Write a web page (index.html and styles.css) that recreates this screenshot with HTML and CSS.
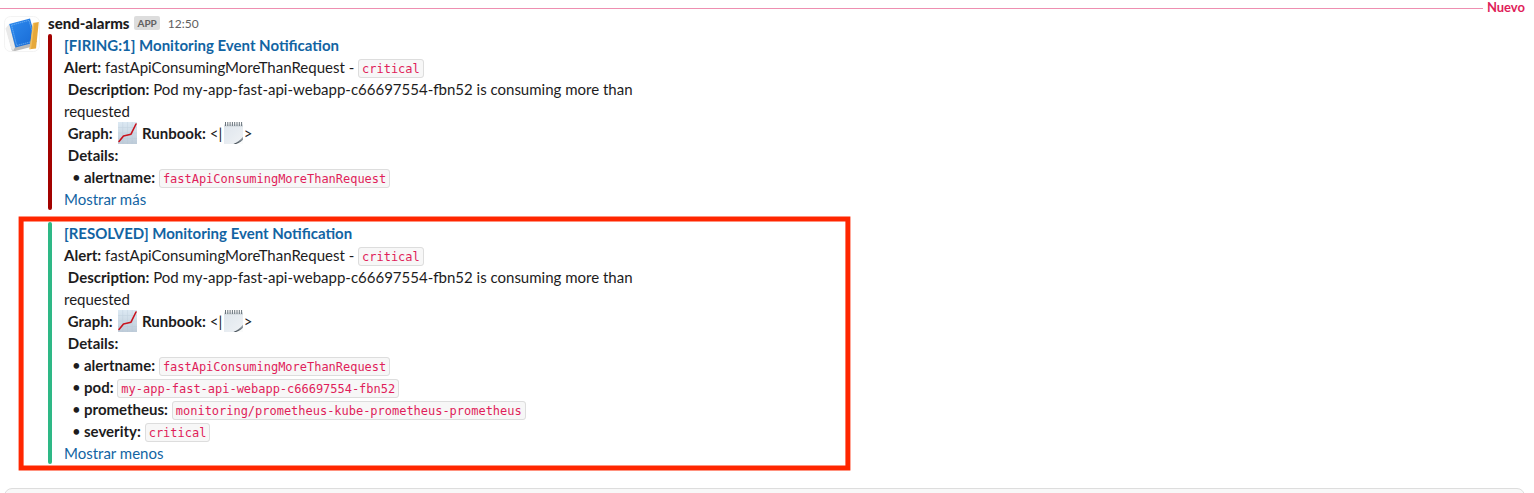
FILE: index.html
```html
<!DOCTYPE html>
<html lang="es">
<head>
<meta charset="utf-8">
<title>send-alarms</title>
<link rel="stylesheet" href="styles.css">
</head>
<body>
<svg class="defs" width="0" height="0" aria-hidden="true">
  <defs>
    <linearGradient id="paper" x1="0" y1="0" x2="0" y2="1"><stop offset="0" stop-color="#dce9f3"/><stop offset="1" stop-color="#bdcbd8"/></linearGradient>
    <linearGradient id="sheet" x1="0" y1="0" x2="1" y2="1"><stop offset="0" stop-color="#dfe6ed"/><stop offset="1" stop-color="#eff2f5"/></linearGradient>
    <linearGradient id="shade" x1="0" y1="1" x2="1" y2="0"><stop offset="0" stop-color="#39434b"/><stop offset="1" stop-color="#a4adb4"/></linearGradient>
    <symbol id="chart" viewBox="0 0 19 22">
      <path fill="url(#paper)" d="M0 0h19v22H0z"/>
      <path d="M0 5.5h19M0 11h19M0 16.5h19M4.7 0v22M9.5 0v22M14.2 0v22" stroke="#b3c5d4" stroke-width=".5" opacity=".5"/>
      <path d="M1 19.500 5.500 14 13 12.200 18 2" fill="none" stroke="#c9131d" stroke-width="1.6" stroke-linejoin="round" stroke-linecap="round"/>
    </symbol>
    <symbol id="notepad" viewBox="0 0 19 22">
      <path fill="url(#sheet)" d="M0 3h19v19H0z"/>
      <path fill="#d7dde2" d="M0 2.500h19V5H0z"/>
      <path d="M1.500 0v4M3.800 0v4M6.100 0v4M8.400 0v4M10.700 0v4M13 0v4M15.300 0v4M17.600 0v4" stroke="#69737b" stroke-width="1"/>
      <path fill="url(#shade)" d="M9.500 21.800C13 20.500 16 18.500 19 14.800V18C16.500 20.500 14 22 11.500 22z"/>
      <path fill="#fafbfb" d="M19 18v4h-6.500c2.500-.8 4.700-2.300 6.500-4z"/>
    </symbol>
  </defs>
</svg>
<main class="channel">
  <div class="divider"><span class="divider-line"></span><span class="divider-label">Nuevo</span></div>
  <article class="message">
    <svg class="avatar" viewBox="0 0 36 36" aria-hidden="true">
      <defs><linearGradient id="cover" x1="0" y1="0" x2="1" y2="1"><stop stop-color="#2e8bef"/><stop offset="1" stop-color="#1768d3"/></linearGradient></defs>
      <rect x=".5" y=".5" width="35" height="35" rx="6" fill="#fefefe" stroke="#f3f3f3"/>
      <path fill="#b9b9b9" d="M2.500 13 8 34.500l3 .5 21-5.200-.5-3z"/>
      <path fill="#e9e9e9" d="M1.500 12.500 5.500 7.500 11 31.500 9.500 34 7.500 33.500z"/>
      <path fill="url(#cover)" d="M5.200 8 26 2.500 32.500 26 11.500 31.500z"/>
      <path d="M7.500 9.100 25 4.400 30.800 24.800 12.700 29.500z" fill="none" stroke="#7ab9f5" stroke-width=".7" stroke-dasharray="1.500 .6"/>
      <path fill="#e6a83a" d="M29 7 34.800 6 32 32.500 25.500 33.200z"/>
      <path fill="#f2bf5e" d="M29 7 30.500 6.700 27 33 25.500 33.200z"/>
    </svg>
    <div class="content">
      <header class="sender"><b class="name">send-alarms</b><span class="app">APP</span><time class="time">12:50</time></header>
      <section class="attachment firing">
        <a class="title">[FIRING:1] Monitoring Event Notification</a>
        <p><b>Alert:</b> fastApiConsumingMoreThanRequest - <code>critical</code></p>
        <p>&nbsp;<b>Description:</b> Pod my-app-fast-api-webapp-c66697554-fbn52 is consuming more than<br>requested</p>
        <p>&nbsp;<b>Graph:</b> <svg class="emoji"><use href="#chart"/></svg> <b>Runbook:</b> &lt;|<svg class="emoji"><use href="#notepad"/></svg>&gt;</p>
        <p>&nbsp;<b>Details:</b></p>
        <p><span class="bullet">•</span><b>alertname:</b> <code>fastApiConsumingMoreThanRequest</code></p>
        <a class="more">Mostrar más</a>
      </section>
      <section class="attachment resolved">
        <a class="title">[RESOLVED] Monitoring Event Notification</a>
        <p><b>Alert:</b> fastApiConsumingMoreThanRequest - <code>critical</code></p>
        <p>&nbsp;<b>Description:</b> Pod my-app-fast-api-webapp-c66697554-fbn52 is consuming more than<br>requested</p>
        <p>&nbsp;<b>Graph:</b> <svg class="emoji"><use href="#chart"/></svg> <b>Runbook:</b> &lt;|<svg class="emoji"><use href="#notepad"/></svg>&gt;</p>
        <p>&nbsp;<b>Details:</b></p>
        <p><span class="bullet">•</span><b>alertname:</b> <code>fastApiConsumingMoreThanRequest</code></p>
        <p><span class="bullet">•</span><b>pod:</b> <code>my-app-fast-api-webapp-c66697554-fbn52</code></p>
        <p><span class="bullet">•</span><b>prometheus:</b> <code>monitoring/prometheus-kube-prometheus-prometheus</code></p>
        <p><span class="bullet">•</span><b>severity:</b> <code>critical</code></p>
        <a class="more">Mostrar menos</a>
        <svg class="highlight" viewBox="0 0 833 256"><rect x="3.100" y="3" width="826.800" height="249" fill="none" stroke="#ff2600" stroke-width="5"/></svg>
      </section>
    </div>
  </article>
  <div class="composer"></div>
</main>
</body>
</html>
```
FILE: styles.css
```css
* { box-sizing: border-box; }
body {
  margin: 0;
  background: #fff;
  color: #1d1c1d;
  font: 15px/22px Lato, "Liberation Sans", sans-serif;
}
.defs { position: absolute; }
.channel { display: flex; flex-direction: column; height: 493px; overflow: hidden; }
.divider { display: flex; align-items: center; height: 16px; flex: none; padding-right: 9px; gap: 4px; }
.divider-line { flex: 1; height: 1px; background: #ee8fb1; }
.divider-label { color: #e01e5a; font-size: 13px; font-weight: 700; line-height: 16px; padding-bottom: 2px; }
.message { display: flex; gap: 8px; padding-left: 4px; height: 472px; flex: none; }
.avatar { width: 36px; height: 36px; flex: none; }
.content { flex: 1; margin-top: -4px; }
.sender { display: flex; align-items: center; height: 22px; }
.name { font-weight: 900; }
.app {
  margin-left: 5px;
  padding: 0 3px;
  height: 14px;
  border-radius: 2px;
  background: #dddddd;
  color: #616061;
  font-size: 10px;
  font-weight: 700;
  line-height: 14px;
}
.time { margin-left: 8px; padding-top: 2px; color: #616061; font-size: 12px; }
.attachment { position: relative; padding-left: 16px; }
.attachment::before {
  content: "";
  position: absolute;
  left: 0;
  top: 0;
  bottom: 0;
  width: 4px;
  border-radius: 2px;
}
.firing { height: 176px; }
.firing::before { background: #a30200; }
.resolved { height: 242px; margin-top: 12px; }
.resolved::before { background: #2eb886; }
p { margin: 0; height: 22px; white-space: nowrap; }
p:has(br) { height: 44px; }
.title, .more { display: block; height: 22px; color: #1264a3; }
.title { font-weight: 700; }
.bullet { display: inline-block; width: 12px; margin-left: 8px; }
code {
  padding: 2px 3px 1px;
  border: 1px solid #dddddd;
  border-radius: 3px;
  background: #f7f7f7;
  color: #e01e5a;
  font: 12px/18px "DejaVu Sans Mono", monospace;
  letter-spacing: -0.02px;
}
.emoji { display: inline-block; width: 19px; height: 22px; vertical-align: top; margin: 0 1px 0 1.7px; }
.highlight {
  position: absolute;
  left: -30px;
  top: -6px;
  width: 833px;
  height: 256px;
}
.composer {
  flex: none;
  height: 20px;
  margin: 0 9px 0 4px;
  border: 1px solid #dddddd;
  border-radius: 8px;
  background: #f8f8f8;
}
```
